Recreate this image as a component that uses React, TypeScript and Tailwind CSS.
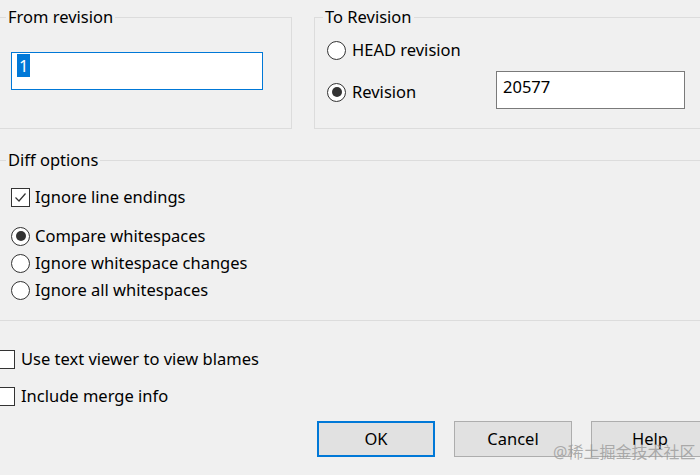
import React from "react";

const font = { fontFamily: '"Noto Sans", "Liberation Sans", sans-serif' };

const Radio = ({ checked }: { checked?: boolean }) => (
  <span className="flex h-[19px] w-[19px] shrink-0 items-center justify-center rounded-full border border-[#333333] bg-white">
    {checked && <span className="h-[10px] w-[10px] rounded-full bg-[#333333]" />}
  </span>
);

const Check = ({ checked }: { checked?: boolean }) => (
  <span className="flex h-[19px] w-[19px] shrink-0 items-center justify-center border border-[#333333] bg-white">
    {checked && (
      <svg width="13" height="13" viewBox="0 0 13 13" fill="none">
        <path d="M1.5 6.5 L5 10 L11.5 2.5" stroke="#333333" strokeWidth="1.2" />
      </svg>
    )}
  </span>
);

const Option = ({
  kind,
  checked,
  label,
  gap = "gap-[5px]",
}: {
  kind: "radio" | "check";
  checked?: boolean;
  label: string;
  gap?: string;
}) => (
  <div className={`flex h-[22px] items-center ${gap}`}>
    {kind === "radio" ? <Radio checked={checked} /> : <Check checked={checked} />}
    <span className="whitespace-nowrap leading-[22px]">{label}</span>
  </div>
);

const Button = ({ label, primary }: { label: string; primary?: boolean }) => (
  <button
    className={`h-[36px] w-[118px] shrink-0 bg-[#e1e1e1] text-[16.5px] text-black ${
      primary ? "border-2 border-[#0078d7]" : "border border-[#adadad]"
    }`}
  >
    {label}
  </button>
);

export default function App() {
  return (
    <div
      className="relative h-[475px] w-[700px] overflow-hidden bg-[#f0f0f0] text-[16.5px] text-black"
      style={font}
    >
      <div className="flex pt-[6px]">
        <fieldset className="ml-[-10px] h-[123px] w-[302px] shrink-0 border border-[#dcdcdc]">
          <legend className="ml-[15px] px-[2px] leading-[22px]">From revision</legend>
          <div className="ml-[20px] mt-[24px] h-[38px] w-[252px] border border-[#0078d7] bg-white pl-[5px] pt-[1px]">
            <span className="inline-block h-[23px] bg-[#0078d7] px-[2px] leading-[23px] text-white">1</span>
          </div>
        </fieldset>
        <fieldset className="ml-[22px] h-[123px] w-[420px] shrink-0 border border-[#dcdcdc]">
          <legend className="ml-[8px] px-[2px] leading-[22px]">To Revision</legend>
          <div className="flex flex-col pl-[12px]">
            <div className="mt-[11px]">
              <Option kind="radio" label="HEAD revision" gap="gap-[6px]" />
            </div>
            <div className="mt-[10px] flex">
              <div className="mt-[10px] w-[169px]">
                <Option kind="radio" checked label="Revision" gap="gap-[6px]" />
              </div>
              <div className="h-[38px] w-[189px] border border-[#7a7a7a] bg-white pl-[6px] pt-[3px] leading-[23px]">
                20577
              </div>
            </div>
          </div>
        </fieldset>
      </div>

      <fieldset className="ml-[-10px] mt-[20px] h-[172px] w-[720px] border border-[#dcdcdc]">
        <legend className="ml-[15px] px-[2px] leading-[22px]">Diff options</legend>
        <div className="flex flex-col pl-[20px]">
          <div className="mt-[15px]">
            <Option kind="check" checked label="Ignore line endings" />
          </div>
          <div className="mt-[17px] flex flex-col gap-[5px]">
            <Option kind="radio" checked label="Compare whitespaces" />
            <Option kind="radio" label="Ignore whitespace changes" />
            <Option kind="radio" label="Ignore all whitespaces" />
          </div>
        </div>
      </fieldset>

      <div className="ml-[-4px] mt-[27px] flex flex-col gap-[15px]">
        <Option kind="check" label="Use text viewer to view blames" gap="gap-[6px]" />
        <Option kind="check" label="Include merge info" gap="gap-[6px]" />
      </div>

      <div className="ml-[317px] mt-[14px] flex gap-[19px]">
        <Button label="OK" primary />
        <Button label="Cancel" />
        <Button label="Help" />
      </div>

      <span
        className="absolute left-[553px] top-[442px] whitespace-nowrap text-[16px] leading-[20px] text-[#9a9a9a]/80"
        style={{ fontFamily: '"Noto Sans", "Noto Sans CJK SC", sans-serif' }}
      >
        @稀土掘金技术社区
      </span>
    </div>
  );
}
